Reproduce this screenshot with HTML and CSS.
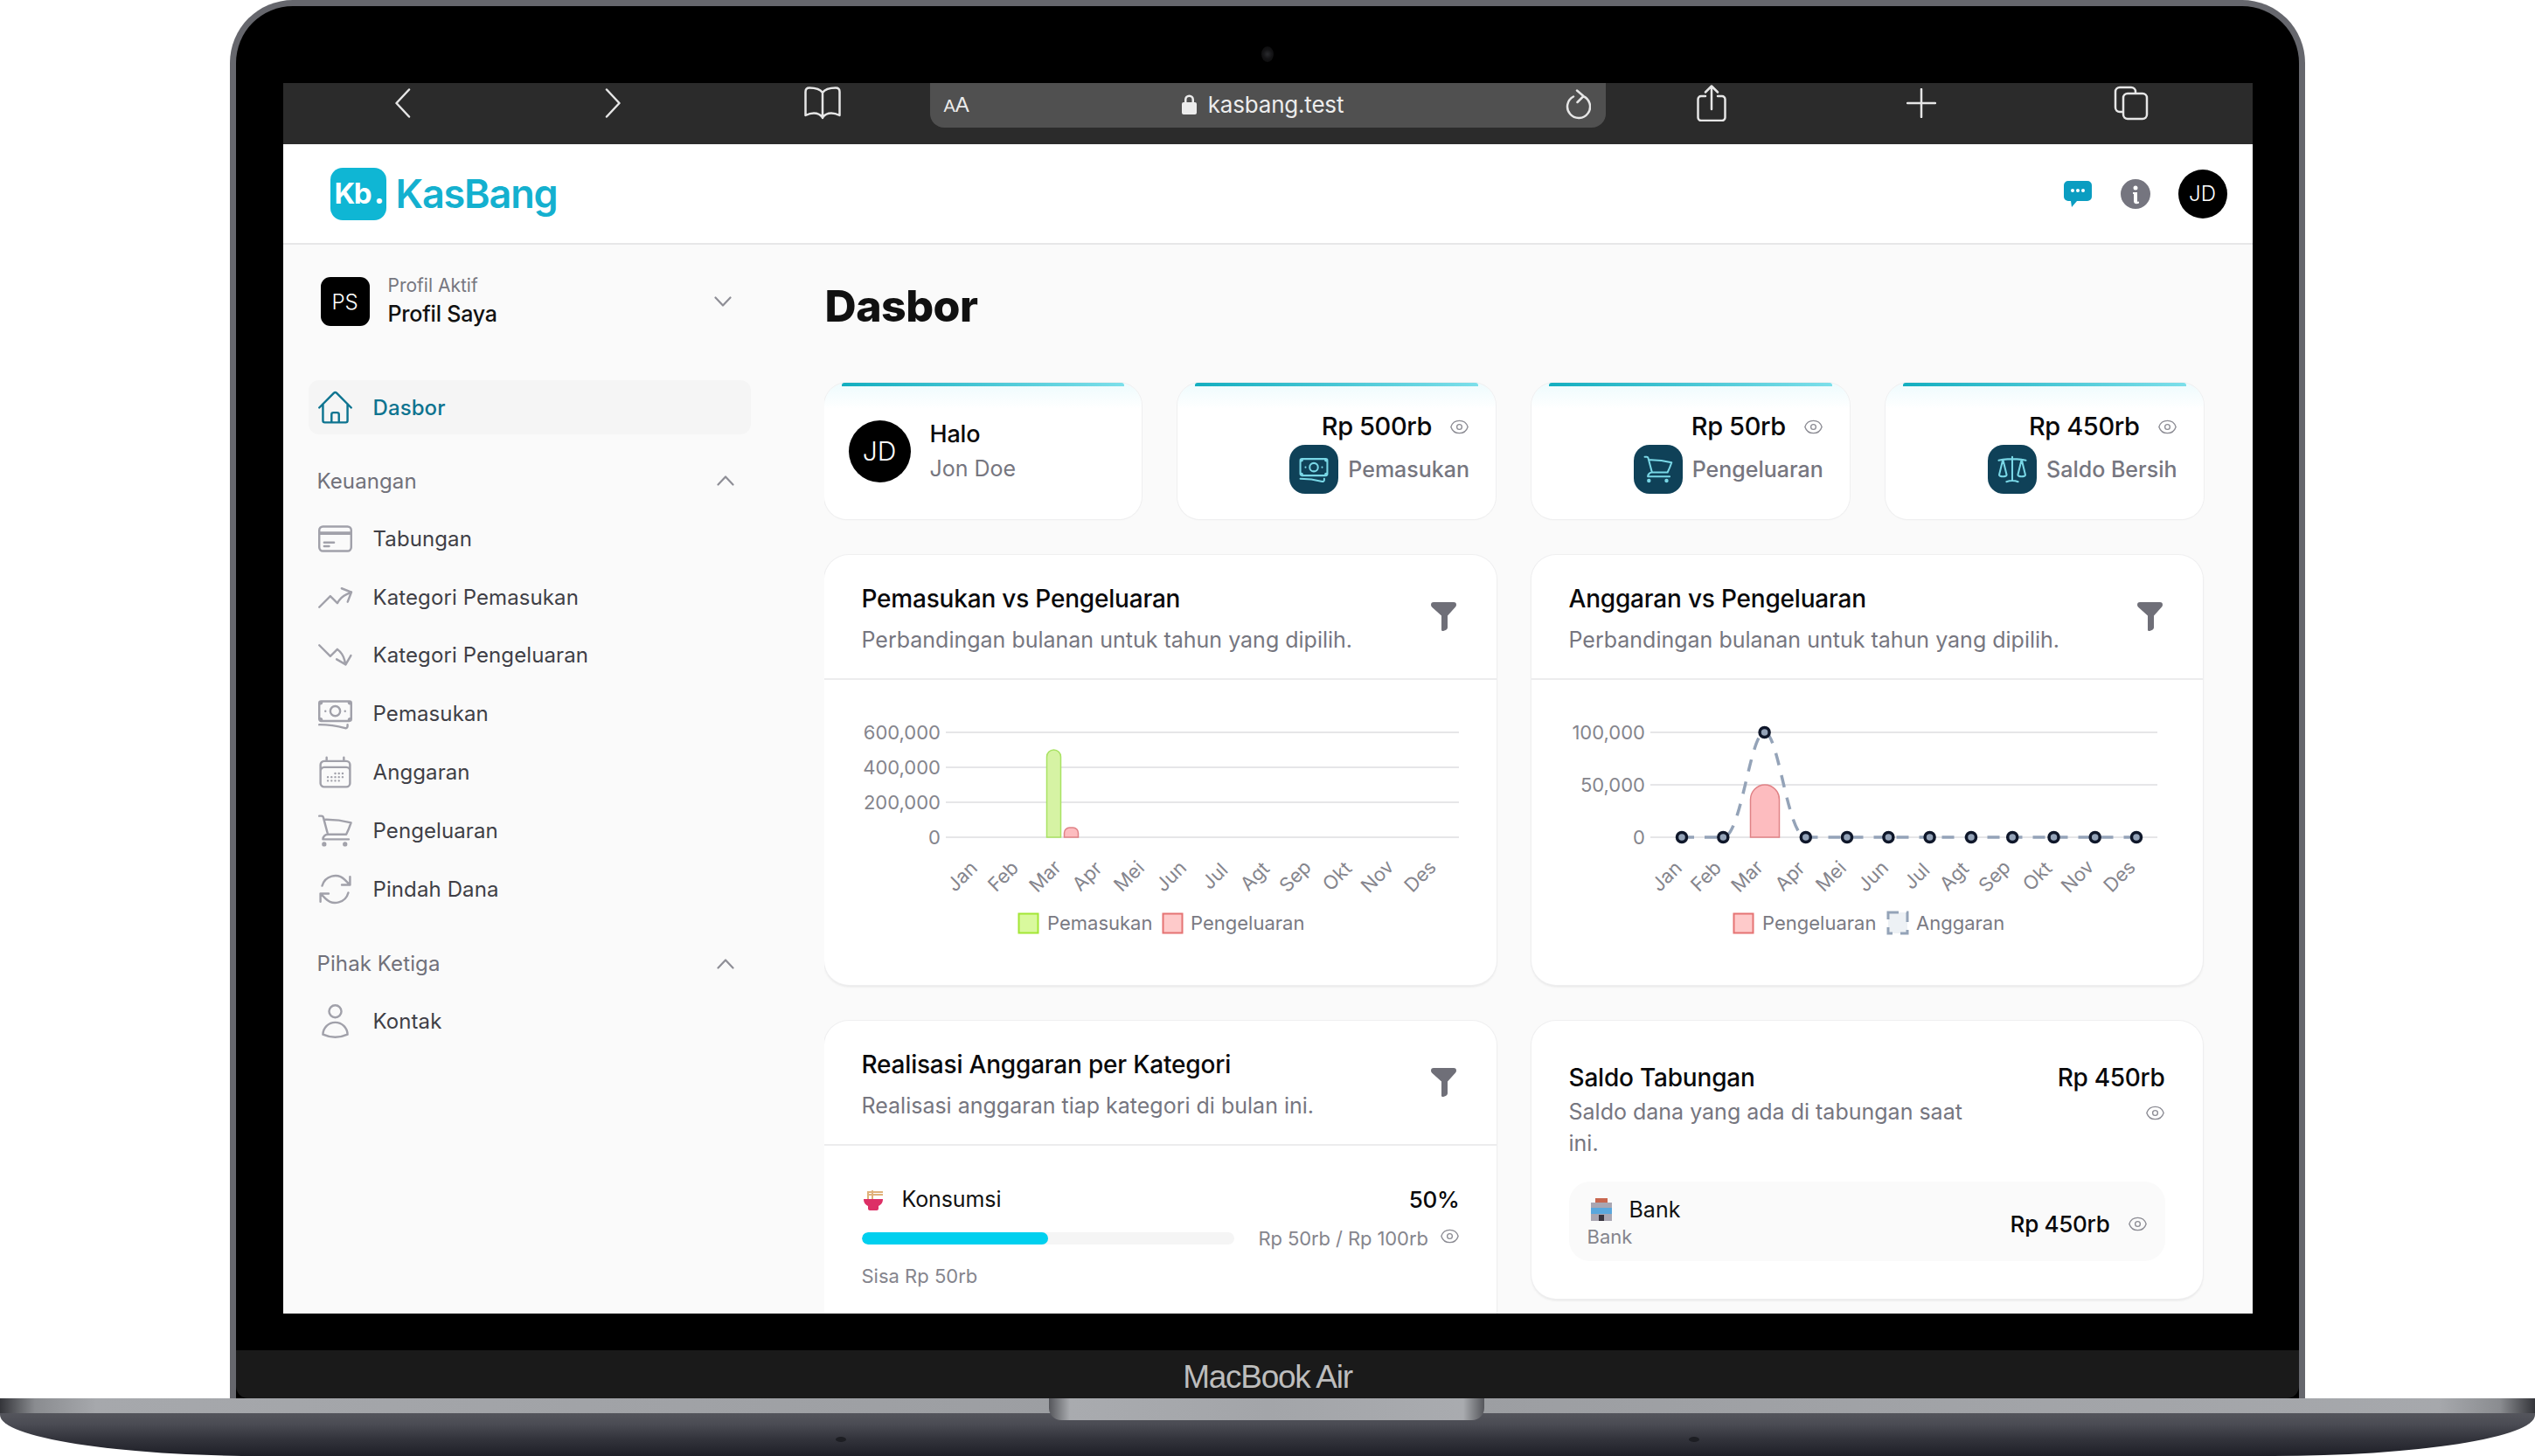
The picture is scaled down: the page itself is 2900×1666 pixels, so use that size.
FILE: index.html
```html
<!DOCTYPE html>
<html lang="id">
<head>
<meta charset="utf-8">
<title>KasBang Dasbor</title>
<link rel="stylesheet" href="styles.css">
</head>
<body>
<svg class="defs" width="0" height="0" aria-hidden="true">
  <symbol id="i-home" viewBox="0 0 24 24"><path d="M2.25 12l8.954-8.955c.44-.439 1.152-.439 1.591 0L21.75 12M4.5 9.75v10.125c0 .621.504 1.125 1.125 1.125H9.75v-4.875c0-.621.504-1.125 1.125-1.125h2.25c.621 0 1.125.504 1.125 1.125V21h4.125c.621 0 1.125-.504 1.125-1.125V9.75M8.25 21h8.25"/></symbol>
  <symbol id="i-card" viewBox="0 0 24 24"><path d="M2.25 8.25h19.5M2.25 9h19.5m-16.5 5.25h6m-6 2.25h3m-3.75 3h15a2.25 2.25 0 002.25-2.25V6.75A2.25 2.25 0 0019.5 4.5h-15a2.25 2.25 0 00-2.25 2.25v10.5A2.25 2.25 0 004.5 19.5z"/></symbol>
  <symbol id="i-up" viewBox="0 0 24 24"><path d="M2.25 18L9 11.25l4.306 4.307a11.95 11.95 0 015.814-5.519l2.74-1.22m0 0l-5.94-2.28m5.94 2.28l-2.28 5.941"/></symbol>
  <symbol id="i-down" viewBox="0 0 24 24"><path d="M2.25 6L9 12.75l4.286-4.286a11.948 11.948 0 014.306 6.43l.776 2.898m0 0l3.182-5.511m-3.182 5.51l-5.511-3.181"/></symbol>
  <symbol id="i-cash" viewBox="0 0 24 24"><path d="M2.25 18.75a60.07 60.07 0 0115.797 2.101c.727.198 1.453-.342 1.453-1.096V18.75M3.75 4.5v.75A.75.75 0 013 6h-.75m0 0v-.375c0-.621.504-1.125 1.125-1.125H20.25M2.25 6v9m18-10.5v.75c0 .414.336.75.75.75h.75m-1.5-1.5h.375c.621 0 1.125.504 1.125 1.125v9.75c0 .621-.504 1.125-1.125 1.125h-.375m1.5-1.5H21a.75.75 0 00-.75.75v.75m0 0H3.75m0 0h-.375a1.125 1.125 0 01-1.125-1.125V15m1.5 1.5v-.75A.75.75 0 003 15h-.75M15 10.5a3 3 0 11-6 0 3 3 0 016 0zm3 0h.008v.008H18V10.5zm-12 0h.008v.008H6V10.5z"/></symbol>
  <symbol id="i-cal" viewBox="0 0 24 24"><path d="M6.75 3v2.25M17.25 3v2.25M3 18.75V7.5a2.25 2.25 0 012.25-2.25h13.5A2.25 2.25 0 0121 7.5v11.25m-18 0A2.25 2.25 0 005.25 21h13.5A2.25 2.25 0 0021 18.75m-18 0v-7.5A2.25 2.25 0 015.25 9h13.5A2.25 2.25 0 0121 11.25v7.5m-9-6h.008v.008H12v-.008zM12 15h.008v.008H12V15zm0 2.25h.008v.008H12v-.008zM9.75 15h.008v.008H9.75V15zm0 2.25h.008v.008H9.75v-.008zM7.5 15h.008v.008H7.5V15zm0 2.25h.008v.008H7.5v-.008zm6.75-4.5h.008v.008h-.008v-.008zm0 2.25h.008v.008h-.008V15zm0 2.25h.008v.008h-.008v-.008zm2.25-4.5h.008v.008H16.5v-.008zm0 2.25h.008v.008H16.5V15z"/></symbol>
  <symbol id="i-cart" viewBox="0 0 24 24"><path d="M2.25 3h1.386c.51 0 .955.343 1.087.835l.383 1.437M7.5 14.25a3 3 0 00-3 3h15.75m-12.75-3h11.218c1.121-2.3 2.1-4.684 2.924-7.138a60.114 60.114 0 00-16.536-1.84M7.5 14.25L5.106 5.272M6 20.25a.75.75 0 11-1.5 0 .75.75 0 011.5 0zm12.75 0a.75.75 0 11-1.5 0 .75.75 0 011.5 0z"/></symbol>
  <symbol id="i-swap" viewBox="0 0 24 24"><path d="M16.023 9.348h4.992v-.001M2.985 19.644v-4.992m0 0h4.992m-4.993 0l3.181 3.183a8.25 8.25 0 0013.803-3.7M4.031 9.865a8.25 8.25 0 0113.803-3.7l3.181 3.182m0-4.991v4.99"/></symbol>
  <symbol id="i-user" viewBox="0 0 24 24"><path d="M15.75 6a3.75 3.75 0 11-7.5 0 3.75 3.75 0 017.5 0zM4.501 20.118a7.5 7.5 0 0114.998 0A17.933 17.933 0 0112 21.75c-2.676 0-5.216-.584-7.499-1.632z"/></symbol>
  <symbol id="i-eye" viewBox="0 0 24 24"><path d="M2.036 12.322a1.012 1.012 0 010-.639C3.423 7.51 7.36 4.5 12 4.5c4.638 0 8.573 3.007 9.963 7.178.07.207.07.431 0 .639C20.577 16.49 16.64 19.5 12 19.5c-4.638 0-8.573-3.007-9.963-7.178z"/><path d="M15 12a3 3 0 11-6 0 3 3 0 016 0z"/></symbol>
  <symbol id="i-scale" viewBox="0 0 24 24"><path d="M12 3v17.25m0 0c-1.472 0-2.882.265-4.185.75M12 20.25c1.472 0 2.882.265 4.185.75M18.75 4.97A48.416 48.416 0 0012 4.5c-2.291 0-4.545.16-6.75.47m13.5 0c1.01.143 2.01.317 3 .52m-3-.52l2.62 10.726c.122.499-.106 1.028-.589 1.202a5.988 5.988 0 01-2.031.352 5.988 5.988 0 01-2.031-.352c-.483-.174-.711-.703-.59-1.202L18.75 4.97zm-16.5.52c.99-.203 1.99-.377 3-.52m0 0l2.62 10.726c.122.499-.106 1.028-.589 1.202a5.989 5.989 0 01-2.031.352 5.989 5.989 0 01-2.031-.352c-.483-.174-.711-.703-.59-1.202L5.25 4.97z"/></symbol>
  <symbol id="i-filter" viewBox="0 0 29 33"><path d="M3 0h23c2 0 3 1 3 3 0 1-.4 2-1.2 2.8L19 15.5V29c0 1.600-1 2.400-2.200 3l-2.600 1c-1 .3-2.200-.4-2.200-1.600V15.500L1.200 5.800C.4 5 0 4 0 3 0 1 1 0 3 0z"/></symbol>
  <symbol id="i-chev" viewBox="0 0 20 12"><path d="M1.500 1.500L10 10.500l8.500-9"/></symbol>
</svg>

<div class="laptop">
  <div class="lid">
    <div class="bezel-top"><span class="cam"></span></div>
    <div class="screen">
      <div class="browser">
        <span class="tool"><svg class="bi" width="20" height="34" viewBox="0 0 20 34"><path d="M17 1.500L2.500 17 17 32.500"/></svg></span>
        <span class="tool"><svg class="bi" width="20" height="34" viewBox="0 0 20 34"><path d="M3 1.500L17.500 17 3 32.500"/></svg></span>
        <span class="tool"><svg class="bi" width="44" height="38" viewBox="0 0 44 38"><path d="M22 7C19 2.500 14 1.500 7 1.500 4 1.500 2.500 3 2.500 6v27c3-1.500 6-2.500 9.500-2.500 4.500 0 7.500 1.500 10 5 2.500-3.500 5.500-5 10-5 3.500 0 6.500 1 9.500 2.500V6c0-3-1.500-4.500-4.500-4.500-7 0-12 1-15 5.500zM22 7v29"/></svg></span>
        <div class="url">
          <span class="aa"><span class="aa-s">A</span>A</span>
          <span class="addr"><svg width="17" height="23" viewBox="0 0 17 23"><path class="lock" d="M3 9V6a5.500 5.500 0 0111 0v3h1a2 2 0 012 2v10a2 2 0 01-2 2H2a2 2 0 01-2-2V11a2 2 0 012-2zm2.500 0h6V6a3 3 0 00-6 0z"/></svg><span>kasbang.test</span></span>
          <svg class="bi" width="30" height="36" viewBox="0 0 30 36"><path d="M10 8.500A13 13 0 1021 8M14 1.500l7.500 6.500-7 7"/></svg>
        </div>
        <span class="tool tool-after"><svg class="bi" width="34" height="42" viewBox="0 0 34 42"><path d="M10 13H5a3.500 3.500 0 00-3.500 3.500v21A3.500 3.500 0 005 41h24a3.500 3.500 0 003.500-3.500v-21A3.500 3.500 0 0029 13h-5M17 28V2M10 8.500L17 1.500l7 7"/></svg></span>
        <span class="tool"><svg class="bi" width="34" height="34" viewBox="0 0 34 34"><path d="M17 1v32M1 17h32"/></svg></span>
        <span class="tool"><svg class="bi" width="40" height="40" viewBox="0 0 40 40"><path d="M10 30H7a5 5 0 01-5-5V7a5 5 0 015-5h13a5 5 0 015 5v1"/><rect x="11" y="9" width="27" height="29" rx="5"/></svg></span>
      </div>

      <div class="app">
        <header class="topbar">
          <div class="brand">
            <span class="logo-mark">Kb<i>.</i></span>
            <span class="logo-text">KasBang</span>
          </div>
          <div class="top-actions">
            <svg class="chat" width="32" height="30" viewBox="0 0 32 30"><path d="M5 0h22a5 5 0 015 5v13a5 5 0 01-5 5H15l-6 7-1-7H5a5 5 0 01-5-5V5a5 5 0 015-5z"/><circle class="dot" cx="10" cy="11" r="2"/><circle class="dot" cx="16" cy="11" r="2"/><circle class="dot" cx="22" cy="11" r="2"/></svg>
            <svg class="info" width="34" height="34" viewBox="0 0 34 34"><circle cx="17" cy="17" r="17"/><circle class="dot" cx="17" cy="10" r="2.500"/><path class="dot" d="M14 15h5v10c0 1 1 1 2 .5v2c-3 1.500-6 .8-6-2.500v-8h-1z"/></svg>
            <span class="avatar avatar-sm">JD</span>
          </div>
        </header>

        <div class="workspace">
          <aside class="sidebar">
            <div class="profile">
              <span class="ps">PS</span>
              <div class="profile-text">
                <span class="profile-label">Profil Aktif</span>
                <span class="profile-name">Profil Saya</span>
              </div>
              <svg class="chev chev-profile" width="20" height="12"><use href="#i-chev"/></svg>
            </div>

            <a class="nav nav-active"><svg class="ic"><use href="#i-home"/></svg><span>Dasbor</span></a>

            <div class="section"><span>Keuangan</span><svg class="chev chev-up" width="20" height="12"><use href="#i-chev"/></svg></div>
            <div class="group">
              <a class="nav"><svg class="ic"><use href="#i-card"/></svg><span>Tabungan</span></a>
              <a class="nav"><svg class="ic"><use href="#i-up"/></svg><span>Kategori Pemasukan</span></a>
              <a class="nav"><svg class="ic"><use href="#i-down"/></svg><span>Kategori Pengeluaran</span></a>
              <a class="nav"><svg class="ic"><use href="#i-cash"/></svg><span>Pemasukan</span></a>
              <a class="nav"><svg class="ic"><use href="#i-cal"/></svg><span>Anggaran</span></a>
              <a class="nav"><svg class="ic"><use href="#i-cart"/></svg><span>Pengeluaran</span></a>
              <a class="nav"><svg class="ic"><use href="#i-swap"/></svg><span>Pindah Dana</span></a>
            </div>

            <div class="section section-2"><span>Pihak Ketiga</span><svg class="chev chev-up" width="20" height="12"><use href="#i-chev"/></svg></div>
            <div class="group">
              <a class="nav"><svg class="ic"><use href="#i-user"/></svg><span>Kontak</span></a>
            </div>
          </aside>

          <main class="main">
            <h1 class="page-title">Dasbor</h1>

            <section class="stats">
              <article class="stat stat-hello">
                <span class="avatar avatar-lg">JD</span>
                <div>
                  <div class="hello">Halo</div>
                  <div class="hello-name">Jon Doe</div>
                </div>
              </article>
              <article class="stat">
                <div class="stat-value"><span>Rp 500rb</span><svg class="eye"><use href="#i-eye"/></svg></div>
                <div class="stat-label"><span class="stat-icon"><svg><use href="#i-cash"/></svg></span><span>Pemasukan</span></div>
              </article>
              <article class="stat">
                <div class="stat-value"><span>Rp 50rb</span><svg class="eye"><use href="#i-eye"/></svg></div>
                <div class="stat-label"><span class="stat-icon"><svg><use href="#i-cart"/></svg></span><span>Pengeluaran</span></div>
              </article>
              <article class="stat">
                <div class="stat-value"><span>Rp 450rb</span><svg class="eye"><use href="#i-eye"/></svg></div>
                <div class="stat-label"><span class="stat-icon"><svg><use href="#i-scale"/></svg></span><span>Saldo Bersih</span></div>
              </article>
            </section>

            <section class="panels">
              <article class="panel">
                <div class="panel-head">
                  <div>
                    <h2 class="panel-title">Pemasukan vs Pengeluaran</h2>
                    <p class="panel-sub">Perbandingan bulanan untuk tahun yang dipilih.</p>
                  </div>
                  <svg class="filter"><use href="#i-filter"/></svg>
                </div>
                <svg class="chart" width="769" height="349" viewBox="0 0 769 349">
                  <g class="grid"><line x1="139" x2="726" y1="60" y2="60"/><line x1="139" x2="726" y1="100" y2="100"/><line x1="139" x2="726" y1="140" y2="140"/><line x1="139" x2="726" y1="180" y2="180"/></g>
                  <g class="ylab"><text x="133" y="68">600,000</text><text x="133" y="108">400,000</text><text x="133" y="148">200,000</text><text x="133" y="188">0</text></g>
                  <path class="bar-g" d="M254.500 180V88a8 8 0 0116 0v92z"/>
                  <path class="bar-r" d="M274.500 180v-5a6 6 0 016-6h4a6 6 0 016 6v5z"/>
                  <g class="xlab">
                    <text transform="translate(163 230) rotate(-45)">Jan</text>
                    <text transform="translate(210 230) rotate(-45)">Feb</text>
                    <text transform="translate(258 230) rotate(-45)">Mar</text>
                    <text transform="translate(306 230) rotate(-45)">Apr</text>
                    <text transform="translate(354 230) rotate(-45)">Mei</text>
                    <text transform="translate(402 230) rotate(-45)">Jun</text>
                    <text transform="translate(452 230) rotate(-45)">Jul</text>
                    <text transform="translate(498 230) rotate(-45)">Agt</text>
                    <text transform="translate(544 230) rotate(-45)">Sep</text>
                    <text transform="translate(592 230) rotate(-45)">Okt</text>
                    <text transform="translate(638 230) rotate(-45)">Nov</text>
                    <text transform="translate(687 230) rotate(-45)">Des</text>
                  </g>
                  <rect class="lg-g" x="222.500" y="267.500" width="22" height="22"/>
                  <text class="lg" x="255" y="286">Pemasukan</text>
                  <rect class="lg-r" x="387.500" y="267.500" width="22" height="22"/>
                  <text class="lg" x="419" y="286">Pengeluaran</text>
                </svg>
              </article>

              <article class="panel">
                <div class="panel-head">
                  <div>
                    <h2 class="panel-title">Anggaran vs Pengeluaran</h2>
                    <p class="panel-sub">Perbandingan bulanan untuk tahun yang dipilih.</p>
                  </div>
                  <svg class="filter"><use href="#i-filter"/></svg>
                </div>
                <svg class="chart" width="769" height="349" viewBox="0 0 769 349">
                  <g class="grid"><line x1="136" x2="716" y1="60" y2="60"/><line x1="136" x2="716" y1="120" y2="120"/><line x1="136" x2="716" y1="180" y2="180"/></g>
                  <g class="ylab"><text x="130" y="68">100,000</text><text x="130" y="128">50,000</text><text x="130" y="188">0</text></g>
                  <path class="bar-r bar-r2" d="M250.500 180v-43a16.500 17 0 0133 0v43z"/>
                  <path class="dash" d="M172 180L219.300 180C240 180 250 60 266.600 60C283 60 293 180 313.800 180L692 180"/>
                  <g class="pts">
                    <circle cx="172" cy="180" r="5.500"/><circle cx="219.300" cy="180" r="5.500"/><circle cx="266.600" cy="60" r="5.500"/><circle cx="313.800" cy="180" r="5.500"/><circle cx="361" cy="180" r="5.500"/><circle cx="408.400" cy="180" r="5.500"/><circle cx="455.600" cy="180" r="5.500"/><circle cx="503" cy="180" r="5.500"/><circle cx="550.200" cy="180" r="5.500"/><circle cx="597.500" cy="180" r="5.500"/><circle cx="644.700" cy="180" r="5.500"/><circle cx="692" cy="180" r="5.500"/>
                  </g>
                  <g class="xlab">
                    <text transform="translate(160 230) rotate(-45)">Jan</text>
                    <text transform="translate(205 230) rotate(-45)">Feb</text>
                    <text transform="translate(252 230) rotate(-45)">Mar</text>
                    <text transform="translate(301 230) rotate(-45)">Apr</text>
                    <text transform="translate(348 230) rotate(-45)">Mei</text>
                    <text transform="translate(396 230) rotate(-45)">Jun</text>
                    <text transform="translate(446 230) rotate(-45)">Jul</text>
                    <text transform="translate(489 230) rotate(-45)">Agt</text>
                    <text transform="translate(535 230) rotate(-45)">Sep</text>
                    <text transform="translate(584 230) rotate(-45)">Okt</text>
                    <text transform="translate(630 230) rotate(-45)">Nov</text>
                    <text transform="translate(678 230) rotate(-45)">Des</text>
                  </g>
                  <rect class="lg-r" x="231.500" y="267.500" width="22" height="22"/>
                  <text class="lg" x="264" y="286">Pengeluaran</text>
                  <rect class="lg-d" x="408" y="266" width="22" height="24"/>
                  <text class="lg" x="440" y="286">Anggaran</text>
                </svg>
              </article>

              <article class="panel panel-budget">
                <div class="panel-head">
                  <div>
                    <h2 class="panel-title">Realisasi Anggaran per Kategori</h2>
                    <p class="panel-sub">Realisasi anggaran tiap kategori di bulan ini.</p>
                  </div>
                  <svg class="filter"><use href="#i-filter"/></svg>
                </div>
                <div class="budget">
                  <div class="budget-top">
                    <span class="budget-name">
                      <svg width="28" height="26" viewBox="0 0 28 26"><path d="M7 14V5h17M7 14V8h17M12 14V3" fill="none" stroke="#e0b27a" stroke-width="2"/><path d="M2 13h22c0 5-3 7-5 8v3c0 1-1 2-2 2H9c-1 0-2-1-2-2v-3c-2-1-5-3-5-8z" fill="#dd2f66"/></svg>
                      <span>Konsumsi</span>
                    </span>
                    <span class="budget-pct">50%</span>
                  </div>
                  <div class="budget-mid">
                    <div class="track"><div class="fill" style="width:50%"></div></div>
                    <span class="budget-amt">Rp 50rb / Rp 100rb</span>
                    <svg class="eye eye-end"><use href="#i-eye"/></svg>
                  </div>
                  <div class="budget-rest">Sisa Rp 50rb</div>
                </div>
              </article>

              <article class="panel panel-saving">
                <div class="saving-head">
                  <div class="saving-text">
                    <h2 class="panel-title">Saldo Tabungan</h2>
                    <p class="panel-sub panel-sub-wrap">Saldo dana yang ada di tabungan saat ini.</p>
                  </div>
                  <div class="saving-total">
                    <span class="saving-amt">Rp 450rb</span>
                    <svg class="eye"><use href="#i-eye"/></svg>
                  </div>
                </div>
                <div class="bank">
                  <div>
                    <div class="bank-name">
                      <svg width="26" height="26" viewBox="0 0 26 26"><rect x="6" y="0" width="14" height="8" fill="#c8674f"/><rect x="1" y="5" width="24" height="21" fill="#a9a6b2"/><rect x="1" y="11" width="24" height="7" fill="#5aa7dd"/><rect x="10" y="19" width="6" height="7" fill="#38343f"/></svg>
                      <span>Bank</span>
                    </div>
                    <div class="bank-sub">Bank</div>
                  </div>
                  <div class="bank-right">
                    <span class="bank-amt">Rp 450rb</span>
                    <svg class="eye"><use href="#i-eye"/></svg>
                  </div>
                </div>
              </article>
            </section>
          </main>
        </div>
      </div>
    </div>
    <div class="chin"><span class="model">MacBook Air</span></div>
  </div>
  <div class="base">
    <div class="base-strip"></div>
    <div class="base-body"></div>
    <div class="notch"></div>
    <span class="port port-l"></span>
    <span class="port port-r"></span>
  </div>
</div>
</body>
</html>
```

FILE: styles.css
```css
* { box-sizing: border-box; }
html, body { margin: 0; padding: 0; background: #fff; }
body { width: 2900px; height: 1666px; overflow: hidden; font-family: "Inter", "Liberation Sans", sans-serif; color: #09090b; }
.defs { display: block; height: 0; }
h1, h2, p { margin: 0; }

.laptop { display: flex; flex-direction: column; align-items: center; width: 2900px; height: 1666px; }
.lid { width: 2374px; height: 1600px; background: #000; border: 7px solid #66676d; border-bottom: 0; border-radius: 72px 72px 0 0; display: flex; flex-direction: column; align-items: center; }
.bezel-top { height: 88px; width: 100%; padding-top: 46px; display: flex; justify-content: center; flex: none; }
.cam { width: 14px; height: 18px; border-radius: 50%; background: radial-gradient(circle, #2a2b2e 0, #141416 45%, #090909 100%); }
.screen { width: 2253px; height: 1408px; flex: none; display: flex; flex-direction: column; overflow: hidden; background: #fafafa; }
.chin { flex: none; margin-top: 42px; height: 55px; width: 100%; background: #1a1a1a; border-radius: 0 0 14px 14px; display: flex; align-items: center; justify-content: center; }
.model { font-family: "Liberation Sans", sans-serif; font-size: 37px; letter-spacing: -1.300px; color: #bdbdbd; font-weight: 400; line-height: 1; margin-top: 5px; }

.base { position: relative; width: 2900px; height: 66px; flex: none; }
.base-strip { height: 17px; background: linear-gradient(90deg, #34353a 0, #8a8c90 40px, #a6a8ac 110px, #9a9ca0 50%, #a6a8ac calc(100% - 110px), #8a8c90 calc(100% - 40px), #34353a 100%); }
.base-body { height: 49px; background: linear-gradient(180deg, #54555c 0, #4b4c54 25%, #33343c 60%, #1e1f27 100%); border-radius: 0 0 300px 300px / 0 0 47px 47px; }
.notch { position: absolute; left: 1200px; top: 0; width: 498px; height: 25px; border-radius: 0 0 14px 14px; background: linear-gradient(90deg, #55565b 0, #a9abaf 24px, #a3a5a9 50%, #a9abaf calc(100% - 24px), #55565b 100%); }
.port { position: absolute; top: 44px; width: 12px; height: 6px; border-radius: 50%; background: #1d1e23; }
.port-l { left: 956px; }
.port-r { left: 1932px; }

.browser { height: 70px; flex: none; background: #2b2b2b; display: flex; align-items: flex-start; padding-left: 17px; }
.tool { width: 240px; height: 46px; flex: none; display: flex; align-items: center; justify-content: center; }
.tool-after { margin-left: 1px; }
.bi { fill: none; stroke: #e6e6e6; stroke-width: 2.500px; stroke-linecap: round; stroke-linejoin: round; }
.url { width: 773px; height: 51px; margin-left: 3px; flex: none; background: #505050; border-radius: 0 0 16px 16px; display: flex; align-items: center; justify-content: space-between; padding: 0 17px 2px 16px; color: #ececec; }
.aa { font-size: 24px; line-height: 1; font-family: "Liberation Sans", sans-serif; width: 34px; }
.aa-s { font-size: 20px; }
.addr { display: flex; align-items: center; gap: 13px; font-size: 26px; letter-spacing: -.2px; margin-left: -14px; }
.lock { fill: #ececec; fill-rule: evenodd; }

.app { flex: 1; min-height: 0; display: flex; flex-direction: column; }
.topbar { height: 115px; flex: none; background: #fff; border-bottom: 2px solid #e7e7e8; display: flex; align-items: center; justify-content: space-between; padding: 0 29px 0 54px; }
.brand { display: flex; align-items: center; gap: 11px; }
.logo-mark { width: 64px; height: 60px; background: #0fb6d4; border-radius: 14px; color: #fff; font-size: 33px; font-weight: 700; letter-spacing: -1.500px; display: flex; align-items: center; padding-left: 5px; line-height: 1; }
.logo-mark i { font-style: normal; font-weight: 800; margin-left: 4px; }
.logo-text { font-size: 45px; font-weight: 600; color: #14b0cf; letter-spacing: -1.200px; line-height: 1; }
.top-actions { display: flex; align-items: center; }
.chat { fill: #0b9dc1; margin-right: 33px; }
.info { fill: #75757f; margin-right: 32px; }
.dot { fill: #fff; }
.avatar { background: #000; color: #fff; border-radius: 50%; display: flex; align-items: center; justify-content: center; flex: none; font-weight: 300; }
.avatar-sm { width: 56px; height: 56px; font-size: 24px; }
.avatar-lg { width: 71px; height: 71px; font-size: 30px; }

.workspace { flex: 1; min-height: 0; display: flex; }
.sidebar { width: 619px; flex: none; padding: 37px 0 0 29px; }
.profile { display: flex; align-items: center; width: 506px; height: 56px; padding-left: 14px; }
.ps { width: 56px; height: 56px; border-radius: 11px; background: #000; color: #fff; font-size: 24px; display: flex; align-items: center; justify-content: center; flex: none; font-weight: 300; }
.profile-text { display: flex; flex-direction: column; margin-left: 21px; flex: 1; }
.profile-label { font-size: 21px; color: #76767f; line-height: 28px; }
.profile-name { font-size: 25px; font-weight: 500; color: #111; line-height: 36px; letter-spacing: -.2px; }
.chev { fill: none; stroke: #8e8e96; stroke-width: 2.200px; stroke-linecap: round; stroke-linejoin: round; flex: none; }
.chev-profile { margin-right: 22px; }
.chev-up { transform: rotate(180deg); margin-right: 19px; }

.nav { display: flex; align-items: center; height: 66.800px; padding-left: 8px; font-size: 24px; color: #3f3f46; letter-spacing: .1px; }
.ic { width: 45px; height: 45px; margin-right: 21px; flex: none; fill: none; stroke: #a1a1aa; stroke-width: 1.300px; stroke-linecap: round; stroke-linejoin: round; }
.nav-active { width: 506px; height: 62px; margin-top: 62px; background: #f5f5f5; border-radius: 12px; color: #0e7490; font-weight: 500; }
.nav-active .ic { stroke: #0e7490; }
.section { display: flex; align-items: center; justify-content: space-between; width: 506px; height: 40px; margin-top: 33px; padding-left: 10px; font-size: 24px; color: #71717a; letter-spacing: .1px; }
.section-2 { margin-top: 32px; }
.group { margin-top: 13px; }

.main { flex: 1; min-width: 0; padding: 40px 56px 0 0; overflow: hidden; }
.page-title { font-size: 50px; font-weight: 800; line-height: 60px; letter-spacing: -.5px; color: #111; padding-left: 1px; }
.stats { margin-top: 58px; display: grid; grid-template-columns: repeat(4, 1fr); gap: 41px; }
.stat { position: relative; height: 156px; border-radius: 26px; background: linear-gradient(180deg, #eefbfd 0, #fff 30px); box-shadow: 0 0 0 1px #efeff0, 0 1px 2px rgba(0,0,0,.05); padding: 32px 30px 0 0; display: flex; flex-direction: column; align-items: flex-end; }
.stat::before { content: ""; position: absolute; left: 20px; right: 20px; top: 0; height: 4px; border-radius: 3px 3px 0 0; background: linear-gradient(90deg, #13aebf 0, #7cdfea 100%); }
.stat-hello { flex-direction: row; align-items: center; justify-content: flex-start; padding: 0 0 0 28px; gap: 22px; }
.hello { font-size: 27px; font-weight: 500; line-height: 40px; letter-spacing: -.2px; }
.hello-name { font-size: 25px; color: #76767f; line-height: 38px; }
.stat-value { height: 36px; display: flex; align-items: center; gap: 20px; font-size: 29px; font-weight: 500; letter-spacing: -.4px; line-height: 36px; }
.eye { width: 23px; height: 23px; fill: none; stroke: #8b8b93; stroke-width: 1.400px; flex: none; }
.stat-label { margin-top: 3px; display: flex; align-items: center; gap: 11px; font-size: 25px; font-weight: 500; color: #76767f; }
.stat-icon { width: 56px; height: 56px; border-radius: 18px; background: #0f4158; display: flex; align-items: center; justify-content: center; }
.stat-icon svg { width: 38px; height: 38px; fill: none; stroke: #79d7e6; stroke-width: 1.300px; stroke-linecap: round; stroke-linejoin: round; }

.panels { margin-top: 41px; display: grid; grid-template-columns: 769px 768px; column-gap: 40px; row-gap: 41px; align-items: start; }
.panel { background: #fff; border-radius: 28px; box-shadow: 0 0 0 1px #efeff0, 0 2px 3px rgba(0,0,0,.09); }
.panel-head { height: 143px; padding: 30px 46px 0 43px; display: flex; justify-content: space-between; border-bottom: 2px solid #ececed; }
.panel-title { font-size: 28px; font-weight: 500; line-height: 40px; letter-spacing: -.2px; color: #09090b; white-space: nowrap; }
.panel-sub { font-size: 25px; color: #76767f; line-height: 40px; margin-top: 7px; }
.filter { width: 29px; height: 33px; margin-top: 24px; fill: #6f6f78; flex: none; }
.chart { display: block; }
.grid line { stroke: #e6e6e8; stroke-width: 2px; }
.ylab text { font-size: 22px; fill: #85858d; text-anchor: end; }
.xlab text { font-size: 22px; fill: #85858d; text-anchor: middle; }
.lg { font-size: 22px; fill: #7a7a83; }
.bar-g { fill: #d6f3a4; stroke: #a9e263; stroke-width: 1.500px; }
.bar-r { fill: #fdbcbf; stroke: #e08286; stroke-width: 1.500px; }
.lg-g { fill: #d9f99d; stroke: #a3e635; stroke-width: 2px; }
.lg-r { fill: #fecaca; stroke: #e57373; stroke-width: 2px; }
.lg-d { fill: #edf1f5; stroke: #94a3b8; stroke-width: 3px; stroke-dasharray: 12 9; }
.dash { fill: none; stroke: #94a3b8; stroke-width: 3.500px; stroke-dasharray: 14 12; }
.pts circle { fill: #94a3b8; stroke: #0f172a; stroke-width: 3.500px; }

.panel-budget { height: 370px; border-radius: 28px 28px 0 0; }
.budget { padding: 41px 42px 0 43px; }
.budget-top { display: flex; justify-content: space-between; align-items: center; height: 40px; font-size: 25px; }
.budget-name { display: flex; align-items: center; gap: 18px; color: #111; letter-spacing: -.1px; }
.budget-pct { font-weight: 500; font-size: 26px; letter-spacing: -.3px; }
.budget-mid { margin-top: 5px; height: 40px; display: flex; align-items: center; }
.track { width: 426px; height: 14px; background: #f5f5f5; border-radius: 7px; overflow: hidden; flex: none; }
.fill { height: 100%; background: #00d0ef; border-radius: 7px; }
.budget-amt { margin-left: 28px; font-size: 22px; color: #85858d; white-space: nowrap; flex: 1; letter-spacing: -.1px; }
.eye-end { margin-bottom: 6px; }
.budget-rest { margin-top: 8px; font-size: 22px; line-height: 30px; color: #85858d; }

.panel-saving { padding: 45px 43px 43px; }
.saving-head { display: flex; justify-content: space-between; }
.saving-text { width: 480px; }
.panel-sub-wrap { margin-top: 1px; line-height: 36px; height: 72px; }
.saving-total { display: flex; flex-direction: column; align-items: flex-end; gap: 9px; }
.saving-amt { font-size: 28px; font-weight: 500; line-height: 40px; letter-spacing: -.3px; }
.bank { margin-top: 26px; height: 91px; background: #fafafa; border-radius: 24px; display: flex; align-items: center; justify-content: space-between; padding: 0 20px 0 21px; }
.bank-name { display: flex; align-items: center; gap: 19px; font-size: 25px; line-height: 34px; padding-left: 3px; color: #111; }
.bank-sub { font-size: 22px; line-height: 28px; color: #85858d; }
.bank-right { display: flex; align-items: center; gap: 20px; margin-top: 6px; }
.bank-amt { font-size: 26px; font-weight: 500; letter-spacing: -.3px; }
```
